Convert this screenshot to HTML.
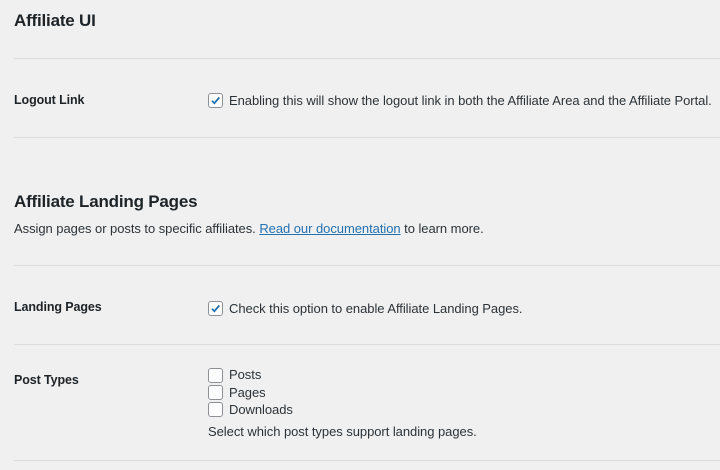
<!DOCTYPE html>
<html><head><style>
body{margin:0;width:720px;height:470px;background:#f0f0f1;font-family:"Liberation Sans",sans-serif;color:#1d2327;position:relative;overflow:hidden}
.a{position:absolute;white-space:nowrap}
h2{position:absolute;margin:0;font-size:17px;font-weight:600;left:14px;letter-spacing:-0.2px}
.hr{position:absolute;left:14px;right:0;height:1px;background:#dcdcde}
.l{font-size:12.5px;font-weight:bold;left:14px;letter-spacing:-0.1px}
.t{font-size:13px;color:#2c3338;letter-spacing:-0.05px}
.cb{position:absolute;width:13px;height:13px;border:1px solid #8c8f94;border-radius:3px;background:#fff;left:208px}
.cb svg{position:absolute;left:0;top:0}
</style></head><body>
<h2 style="top:11px">Affiliate UI</h2>
<div class="hr" style="top:58px"></div>
<div class="a l" style="top:93px">Logout Link</div>
<div class="cb" style="top:93px"><svg width="13" height="13" viewBox="0 0 13 13"><path d="M3 6.8l2.4 2.4L10.3 3.5" fill="none" stroke="#2271b1" stroke-width="1.8"/></svg></div>
<div class="a t" style="left:229px;top:93px">Enabling this will show the logout link in both the Affiliate Area and the Affiliate Portal.</div>
<div class="hr" style="top:137px"></div>
<h2 style="top:192px">Affiliate Landing Pages</h2>
<div class="a t" style="left:14px;top:221px">Assign pages or posts to specific affiliates. <span style="color:#2271b1;text-decoration:underline">Read our documentation</span> to learn more.</div>
<div class="hr" style="top:265px"></div>
<div class="a l" style="top:300px">Landing Pages</div>
<div class="cb" style="top:301px"><svg width="13" height="13" viewBox="0 0 13 13"><path d="M3 6.8l2.4 2.4L10.3 3.5" fill="none" stroke="#2271b1" stroke-width="1.8"/></svg></div>
<div class="a t" style="left:229px;top:301px">Check this option to enable Affiliate Landing Pages.</div>
<div class="hr" style="top:344px"></div>
<div class="a l" style="top:373px">Post Types</div>
<div class="cb" style="top:368px"></div>
<div class="a t" style="left:229px;top:367px">Posts</div>
<div class="cb" style="top:385px"></div>
<div class="a t" style="left:229px;top:385px">Pages</div>
<div class="cb" style="top:402px"></div>
<div class="a t" style="left:229px;top:402px">Downloads</div>
<div class="a t" style="left:208px;top:424px">Select which post types support landing pages.</div>
<div class="hr" style="top:460px"></div>
</body></html>
